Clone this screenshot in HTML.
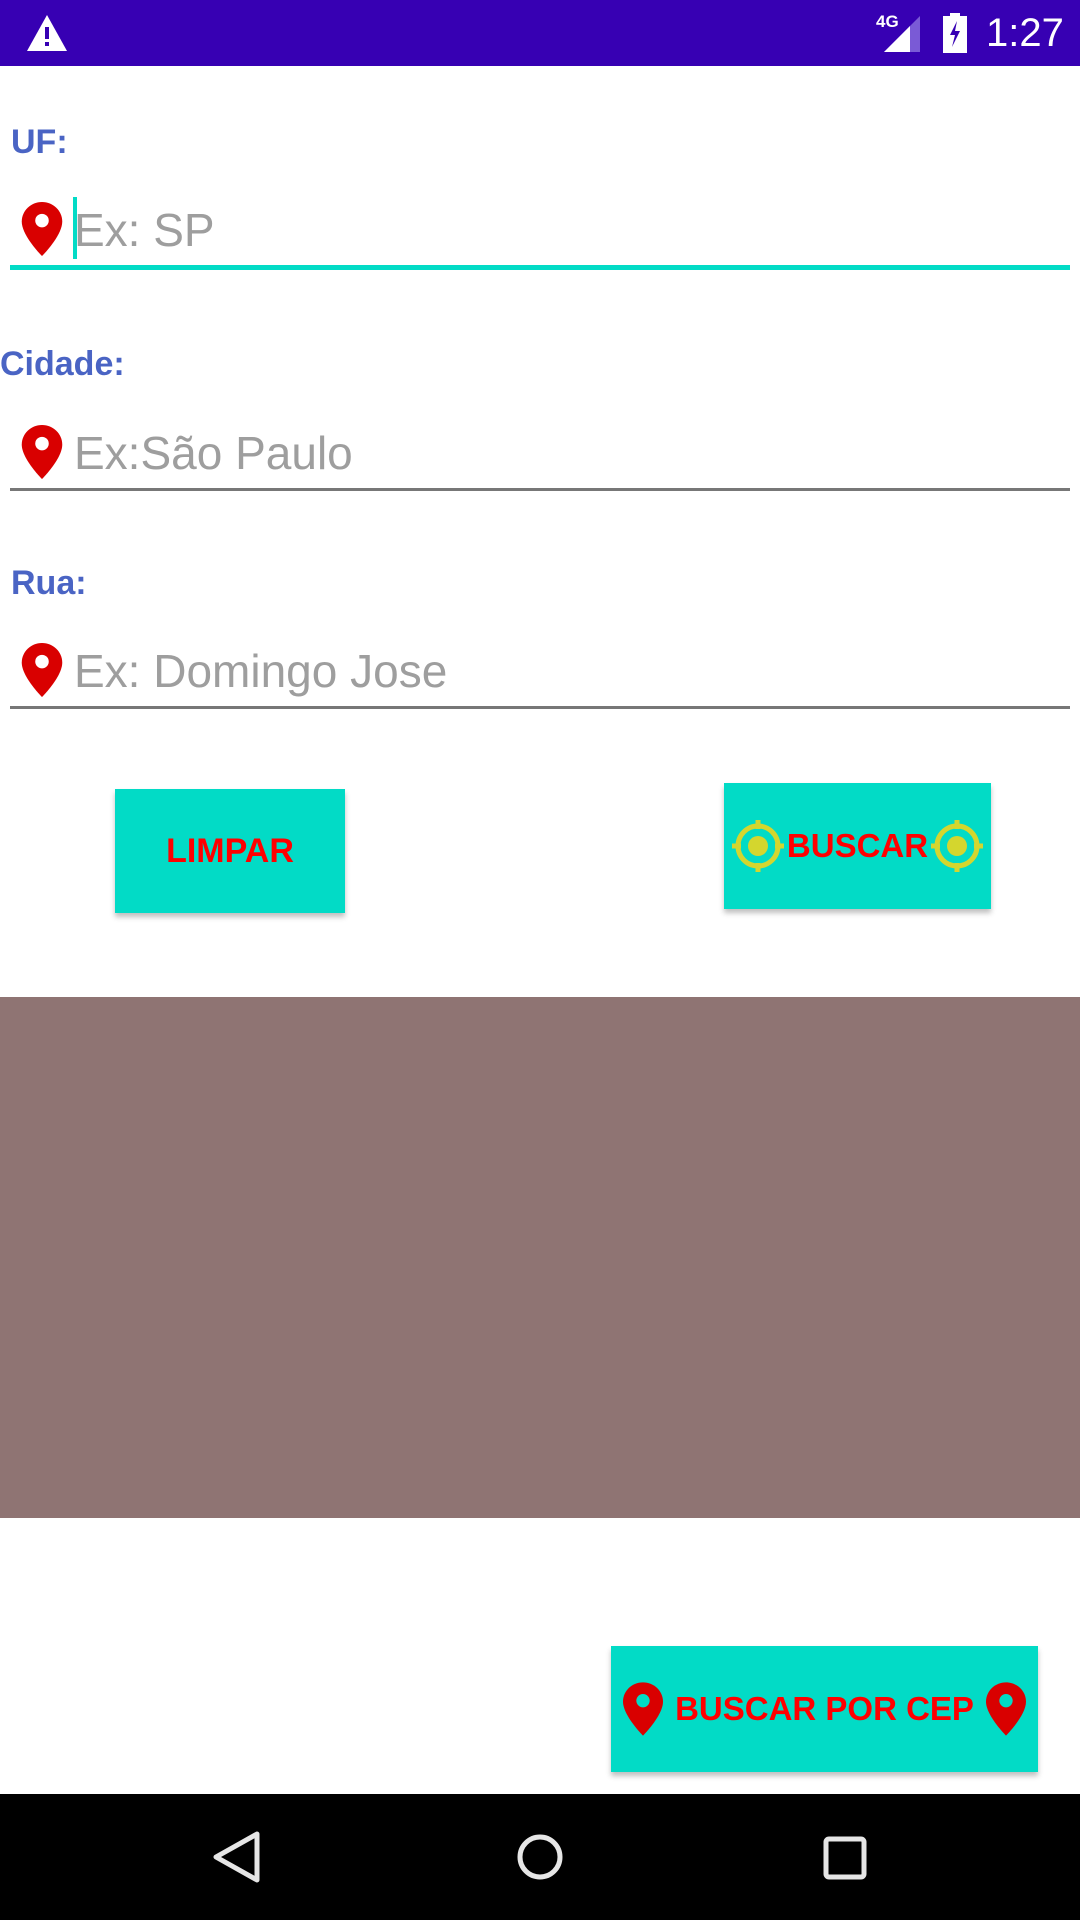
<!DOCTYPE html>
<html><head><meta charset="utf-8"><style>
*{margin:0;padding:0;box-sizing:border-box}
body{width:1080px;height:1920px;position:relative;background:#fff;font-family:"Liberation Sans",Arial,sans-serif;overflow:hidden}
.a{position:absolute}
.lbl{position:absolute;color:#4a64c4;font-weight:bold;font-size:34px;line-height:40px}
.hint{position:absolute;left:74px;color:#9e9e9e;font-size:46px;line-height:54px}
.line{position:absolute;left:10px;width:1060px;height:3px;background:#777}
.btn{position:absolute;background:#02dbc6;box-shadow:0 4px 5px rgba(0,0,0,.25);color:#f00;font-weight:bold;font-size:34px;display:flex;align-items:center;justify-content:center}
</style></head><body>
<div class="a" style="left:0;top:0;width:1080px;height:66px;background:#3700b3"></div>
<svg class="a" style="left:26px;top:14px" width="42" height="38" viewBox="0 0 42 38"><path d="M21 1 L41 37 L1 37 Z" fill="#fff"/><rect x="19" y="13" width="4" height="12" fill="#3700b3"/><rect x="19" y="28" width="4" height="4" fill="#3700b3"/></svg>
<div class="a" style="left:876px;top:12px;color:#fff;font-size:17px;font-weight:bold">4G</div>
<svg class="a" style="left:884px;top:16px" width="38" height="36" viewBox="0 0 38 36"><path d="M36 0 L36 36 L0 36 Z" fill="#7a5ad6"/><path d="M26 10 L26 36 L0 36 Z" fill="#fff"/></svg>
<svg class="a" style="left:942px;top:13px" width="26" height="40" viewBox="0 0 26 40"><rect x="8" y="0" width="10" height="4" fill="#fff"/><rect x="1" y="3" width="24" height="37" fill="#fff"/><path d="M15 8 L8 22 L13 22 L10 34 L18 18 L13 18 Z" fill="#3700b3"/></svg>
<div class="a" style="left:986px;top:10px;color:#fff;font-size:40px;line-height:46px">1:27</div>

<div class="lbl" style="left:11px;top:122px">UF:</div>
<svg class="a" style="left:21px;top:202px" width="42" height="54" viewBox="0 0 24 32"><path d="M12 0C5.4 0 0 5.2 0 11.6 0 20 12 32 12 32S24 20 24 11.6C24 5.2 18.6 0 12 0Z" fill="#d90000"/><circle cx="12" cy="11" r="4" fill="#fff"/></svg>
<div class="a" style="left:73px;top:197px;width:4px;height:62px;background:#02dbc6"></div>
<div class="hint" style="top:203px">Ex: SP</div>
<div class="a" style="left:10px;top:265px;width:1060px;height:5px;background:#02dbc6"></div>

<div class="lbl" style="left:0;top:344px">Cidade:</div>
<svg class="a" style="left:21px;top:425px" width="42" height="54" viewBox="0 0 24 32"><path d="M12 0C5.4 0 0 5.2 0 11.6 0 20 12 32 12 32S24 20 24 11.6C24 5.2 18.6 0 12 0Z" fill="#d90000"/><circle cx="12" cy="11" r="4" fill="#fff"/></svg>
<div class="hint" style="top:426px">Ex:São Paulo</div>
<div class="line" style="top:488px"></div>

<div class="lbl" style="left:11px;top:563px">Rua:</div>
<svg class="a" style="left:21px;top:643px" width="42" height="54" viewBox="0 0 24 32"><path d="M12 0C5.4 0 0 5.2 0 11.6 0 20 12 32 12 32S24 20 24 11.6C24 5.2 18.6 0 12 0Z" fill="#d90000"/><circle cx="12" cy="11" r="4" fill="#fff"/></svg>
<div class="hint" style="top:644px">Ex: Domingo Jose</div>
<div class="line" style="top:706px"></div>

<div class="btn" style="left:115px;top:789px;width:230px;height:124px">LIMPAR</div>
<div class="btn" style="left:724px;top:783px;width:267px;height:126px">
<svg width="58" height="58" viewBox="0 0 58 58"><circle cx="29" cy="29" r="20" fill="none" stroke="#d4d62e" stroke-width="5"/><circle cx="29" cy="29" r="10" fill="#d4d62e"/><path d="M29 3V12M29 46V55M3 29H12M46 29H55" stroke="#d4d62e" stroke-width="5"/></svg><span style="font-size:33px">BUSCAR</span><svg width="58" height="58" viewBox="0 0 58 58"><circle cx="29" cy="29" r="20" fill="none" stroke="#d4d62e" stroke-width="5"/><circle cx="29" cy="29" r="10" fill="#d4d62e"/><path d="M29 3V12M29 46V55M3 29H12M46 29H55" stroke="#d4d62e" stroke-width="5"/></svg></div>

<div class="a" style="left:0;top:997px;width:1080px;height:521px;background:#8f7473"></div>

<div class="btn" style="left:611px;top:1646px;width:427px;height:126px;justify-content:space-between;padding:0 12px">
<svg width="40" height="54" viewBox="0 0 24 32"><path d="M12 0C5.4 0 0 5.2 0 11.6 0 20 12 32 12 32S24 20 24 11.6C24 5.2 18.6 0 12 0Z" fill="#d90000"/><circle cx="12" cy="11" r="4" fill="#02dbc6"/></svg>
<span style="font-size:33px">BUSCAR POR CEP</span>
<svg width="40" height="54" viewBox="0 0 24 32"><path d="M12 0C5.4 0 0 5.2 0 11.6 0 20 12 32 12 32S24 20 24 11.6C24 5.2 18.6 0 12 0Z" fill="#d90000"/><circle cx="12" cy="11" r="4" fill="#02dbc6"/></svg></div>

<div class="a" style="left:0;top:1794px;width:1080px;height:126px;background:#000"></div>
<svg class="a" style="left:210px;top:1830px" width="52" height="54" viewBox="0 0 52 54"><path d="M47 4 L47 50 L6 27 Z" fill="none" stroke="#e6e6e6" stroke-width="5" stroke-linejoin="round"/></svg>
<svg class="a" style="left:515px;top:1832px" width="50" height="50" viewBox="0 0 50 50"><circle cx="25" cy="25" r="20" fill="none" stroke="#e6e6e6" stroke-width="5"/></svg>
<svg class="a" style="left:823px;top:1836px" width="44" height="44" viewBox="0 0 44 44"><rect x="3" y="3" width="38" height="38" rx="3" fill="none" stroke="#e6e6e6" stroke-width="5"/></svg>
</body></html>
